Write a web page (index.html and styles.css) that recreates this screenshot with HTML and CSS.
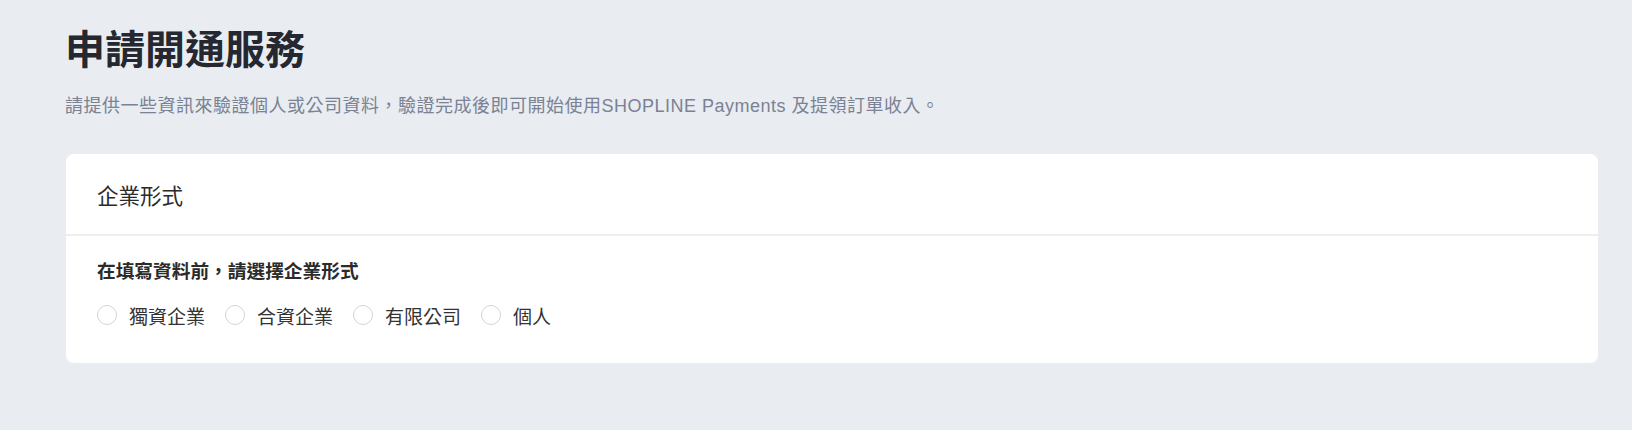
FILE: index.html
```html
<!DOCTYPE html>
<html lang="zh-Hant">
<head>
    <meta charset="UTF-8">
    <meta name="viewport" content="width=device-width, initial-scale=1.0">
    <title>申請開通服務</title>
    <link rel="stylesheet" href="styles.css">
</head>
<body>
    <div class="page">
        <h1 class="page-title">申請開通服務</h1>
        <p class="page-desc">請提供一些資訊來驗證個人或公司資料，驗證完成後即可開始使用SHOPLINE Payments 及提領訂單收入。</p>

        <div class="card">
            <div class="card-header">企業形式</div>
            <div class="card-body">
                <div class="field-label">在填寫資料前，請選擇企業形式</div>
                <div class="radio-group">
                    <label class="radio"><input type="radio" name="biz-type" value="sole"><span class="radio-text">獨資企業</span></label>
                    <label class="radio"><input type="radio" name="biz-type" value="partner"><span class="radio-text">合資企業</span></label>
                    <label class="radio"><input type="radio" name="biz-type" value="company"><span class="radio-text">有限公司</span></label>
                    <label class="radio"><input type="radio" name="biz-type" value="personal"><span class="radio-text">個人</span></label>
                </div>
            </div>
        </div>
    </div>
</body>
</html>
```

FILE: styles.css
```css
body {
    margin: 0;
    font-family: "Liberation Sans", "Noto Sans CJK TC", sans-serif;
    background-color: #e9ecf1; /* light grey-blue page */
    color: #333333;
}

.page {
    padding: 26px 34px 40px 65px;
}

.page-title {
    margin: 0;
    font-size: 40px;
    line-height: 48px;
    font-weight: 700;
    color: #252830;
}

.page-desc {
    margin: 19px 0 0;
    font-size: 18px;
    line-height: 26px;
    letter-spacing: 0.5px;
    color: #7a8294;
}

.card {
    margin-top: 35px;
    margin-left: 1px;
    background-color: #ffffff;
    border-radius: 8px;
}

.card-header {
    height: 80px;
    display: flex;
    align-items: center;
    padding: 0 31px;
    font-size: 21.5px;
    color: #2b2b2b;
    border-bottom: 2px solid #eeeeee;
}

.card-body {
    padding: 23px 31px 35px;
}

.field-label {
    font-size: 18.7px;
    line-height: 26px;
    font-weight: 700;
    color: #2b2b2b;
}

.radio-group {
    display: flex;
    gap: 20px;
    margin-top: 17px;
}

.radio {
    display: flex;
    align-items: center;
    gap: 12px;
    height: 26px;
    font-size: 19px;
    color: #333333;
    cursor: pointer;
}

/* plain grey ring instead of the native radio */
.radio input {
    appearance: none;
    margin: 0;
    width: 20px;
    height: 20px;
    border: 1.5px solid #d3d3d3;
    border-radius: 50%;
    background-color: #ffffff;
    box-sizing: border-box;
}

.radio input:checked {
    border: 6px solid #1f6fd1;
}
```
